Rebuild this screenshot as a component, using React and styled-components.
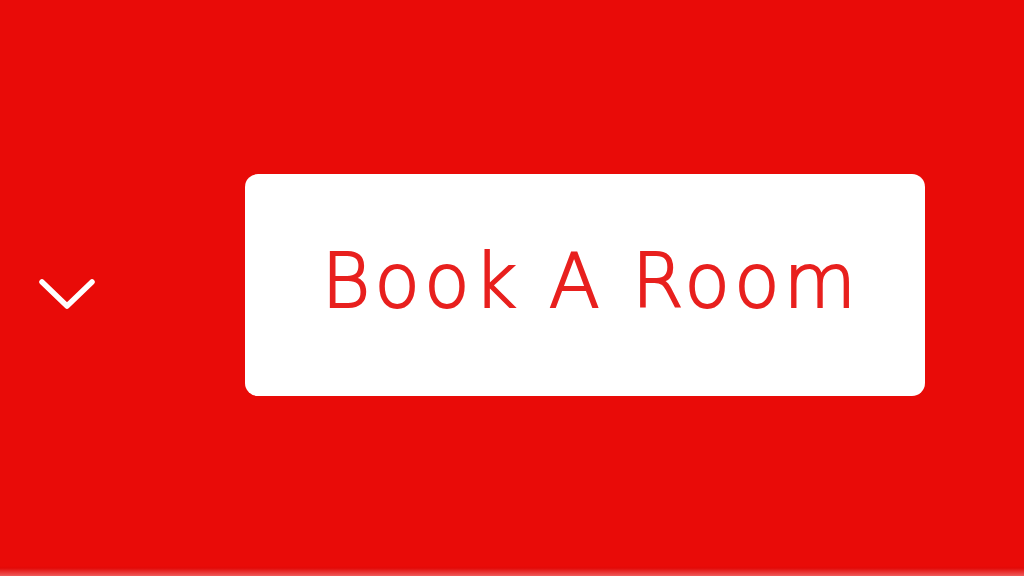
import React from "react";
import styled, { createGlobalStyle } from "styled-components";

const GlobalStyle = createGlobalStyle`
  html, body {
    margin: 0;
    padding: 0;
  }
  body {
    font-family: "DejaVu Sans", "Liberation Sans", sans-serif;
  }
`;

const Bar = styled.div`
  width: 1024px;
  height: 576px;
  box-sizing: border-box;
  display: flex;
  align-items: center;
  padding: 0 0 6px 38px;
  background: linear-gradient(
    to bottom,
    #e90b08 0,
    #e90b08 calc(100% - 10px),
    #e20a08 calc(100% - 8px),
    #ef5a5a 100%
  );
`;

const Toggle = styled.button`
  background: none;
  border: none;
  padding: 0;
  margin: 20px 149px 0 0;
  width: 58px;
  height: 34px;
  display: flex;
  align-items: center;
  justify-content: center;
`;

const BookButton = styled.button`
  width: 680px;
  height: 222px;
  box-sizing: border-box;
  background: #ffffff;
  border: none;
  border-radius: 13px;
  padding: 0 0 8px 12px;
  display: flex;
  align-items: center;
  justify-content: center;
  color: #e8201e;
  font-family: "DejaVu Sans", sans-serif;
  font-size: 74px;
  font-weight: 200;
  letter-spacing: 4.4px;
  -webkit-text-stroke: 2px #e8201e;
`;

export default function App() {
  return (
    <>
      <GlobalStyle />
      <Bar>
        <Toggle aria-label="More">
          <svg width="58" height="34" viewBox="0 0 58 34">
            <path
              d="M4 4 L29 28 L54 4"
              fill="none"
              stroke="#ffffff"
              strokeWidth="5.5"
              strokeLinecap="round"
              strokeLinejoin="round"
            />
          </svg>
        </Toggle>
        <BookButton>Book A Room</BookButton>
      </Bar>
    </>
  );
}
